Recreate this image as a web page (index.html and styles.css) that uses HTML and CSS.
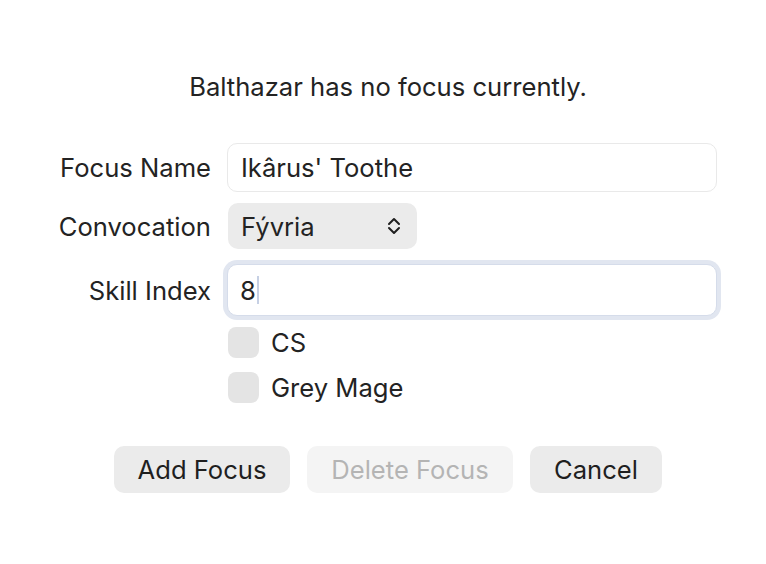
FILE: index.html
```html
<!DOCTYPE html>
<html>
<head>
<meta charset="utf-8">
<link rel="stylesheet" href="styles.css">
</head>
<body>
<div class="dialog">
  <p class="title">Balthazar has no focus currently.</p>
  <div class="form">
    <label class="lbl r1">Focus Name</label>
    <div class="field r1"><span>Ikârus' Toothe</span></div>
    <label class="lbl r2">Convocation</label>
    <div class="r2 popwrap">
      <div class="popup"><span>Fývria</span>
        <svg class="chev" width="16" height="20" viewBox="0 0 16 20"><path d="M3 8 L8 3 L13 8 M3 12 L8 17 L13 12" fill="none" stroke="#1f1f1f" stroke-width="2" stroke-linecap="round" stroke-linejoin="round"/></svg>
      </div>
    </div>
    <label class="lbl r3">Skill Index</label>
    <div class="field focus r3"><span>8</span><span class="caret"></span></div>
    <div class="checks">
      <div class="check"><span class="box"></span><span>CS</span></div>
      <div class="check"><span class="box"></span><span>Grey Mage</span></div>
    </div>
  </div>
  <div class="buttons">
    <div class="btn add">Add Focus</div>
    <div class="btn disabled del">Delete Focus</div>
    <div class="btn cancel">Cancel</div>
  </div>
</div>
</body>
</html>
```

FILE: styles.css
```css
html, body {
  margin: 0;
  padding: 0;
  background: #ffffff;
}
body {
  width: 766px;
  height: 564px;
  font-family: Inter, "Liberation Sans", sans-serif;
  font-size: 25.6px;
  color: #232323;
}
.dialog {
  padding-top: 71px;
}
.title {
  margin: 0;
  text-align: center;
  line-height: 32px;
  padding-left: 10px;
}
.form {
  display: grid;
  grid-template-columns: 211px 490px;
  column-gap: 16px;
  margin-top: 40px;
}
.lbl {
  text-align: right;
  display: flex;
  align-items: center;
  justify-content: flex-end;
}
.field {
  box-sizing: border-box;
  height: 49px;
  border: 1px solid #e9e9e9;
  border-radius: 10px;
  display: flex;
  align-items: center;
  padding-left: 13px;
  background: #fff;
}
.r2 { margin-top: 11px; }
.popwrap { display: flex; }
.popup {
  box-sizing: border-box;
  width: 189px;
  height: 46px;
  margin-left: 1px;
  background: #ebebeb;
  border-radius: 10px;
  display: flex;
  align-items: center;
  justify-content: space-between;
  padding: 0 15px 0 13px;
}
.chev { display: block; }
.field.focus {
  margin-top: 15px;
  height: 52px;
  border: 1px solid #d5dcea;
  box-shadow: 0 0 0 4px #e1e6f0;
  padding-left: 12px;
}
.lbl.r3 { margin-top: 15px; }
.caret {
  display: inline-block;
  width: 2px;
  height: 28px;
  background: #c6d0e4;
  margin-left: 1px;
}
.checks {
  grid-column: 2;
  margin-top: 11px;
  display: flex;
  flex-direction: column;
  gap: 14px;
}
.check {
  display: flex;
  align-items: center;
  gap: 12px;
  margin-left: 1px;
}
.box {
  width: 31px;
  height: 31px;
  border-radius: 8px;
  background: #e4e4e4;
}
.buttons {
  display: flex;
  margin-top: 43px;
  padding-left: 114px;
  gap: 17px;
}
.btn {
  box-sizing: border-box;
  height: 47px;
  border-radius: 10px;
  background: #ebebeb;
  display: flex;
  align-items: center;
  justify-content: center;
  color: #1f1f1f;
}
.add { width: 176px; }
.del { width: 206px; }
.cancel { width: 132px; }
.btn.disabled {
  background: #f4f4f4;
  color: #b4b4b4;
}
```
